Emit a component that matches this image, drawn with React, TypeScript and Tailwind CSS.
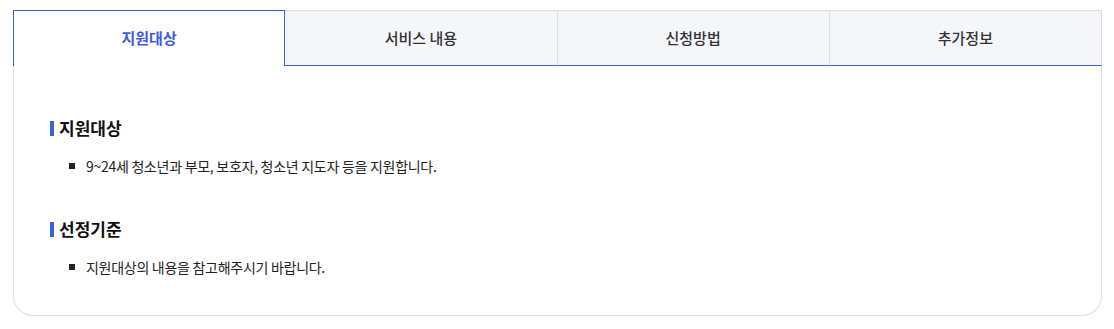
const tabs = ["지원대상", "서비스 내용", "신청방법", "추가정보"];

const sections = [
  { title: "지원대상", items: ["9~24세 청소년과 부모, 보호자, 청소년 지도자 등을 지원합니다."] },
  { title: "선정기준", items: ["지원대상의 내용을 참고해주시기 바랍니다."] },
];

const App = () => {
  const active = 0;

  return (
    <div
      className="min-h-[329px] bg-white pt-[10px] px-[13px] pr-[12px]"
      style={{ fontFamily: '"Noto Sans CJK KR", "Noto Sans", sans-serif' }}
    >
      <div className="grid grid-cols-4 h-[56px]">
        {tabs.map((tab, i) =>
          i === active ? (
            <div
              key={tab}
              className="flex items-center justify-center border border-b-0 border-[#3a62dc] bg-white text-[15px] font-bold text-[#3b5bd9]"
            >
              {tab}
            </div>
          ) : (
            <div
              key={tab}
              className="flex items-center justify-center border-t border-r border-t-[#dcdde2] border-r-[#dcdde2] border-b border-b-[#3a62dc] bg-[#f5f6fa] text-[15px] font-medium text-[#333]"
            >
              {tab}
            </div>
          )
        )}
      </div>
      <div className="border-x border-b border-[#dedede] rounded-b-[20px] px-[36px] pt-[50px] pb-[37px]">
        {sections.map((sec, i) => (
          <div key={sec.title} className={i > 0 ? "mt-[40px]" : ""}>
            <h3 className="flex items-center gap-[5px] text-[17px] leading-[24px] font-bold text-[#111]">
              <span className="w-[4px] h-[15px] bg-[#3a62dc]" />
              {sec.title}
            </h3>
            <ul className="mt-[15px] pl-[19px]">
              {sec.items.map((item) => (
                <li
                  key={item}
                  className="flex items-center gap-[11px] text-[14px] leading-[22px] tracking-[-0.02em] text-[#222]"
                >
                  <span className="w-[6px] h-[6px] bg-[#222] shrink-0" />
                  {item}
                </li>
              ))}
            </ul>
          </div>
        ))}
      </div>
    </div>
  );
};

export default App;
